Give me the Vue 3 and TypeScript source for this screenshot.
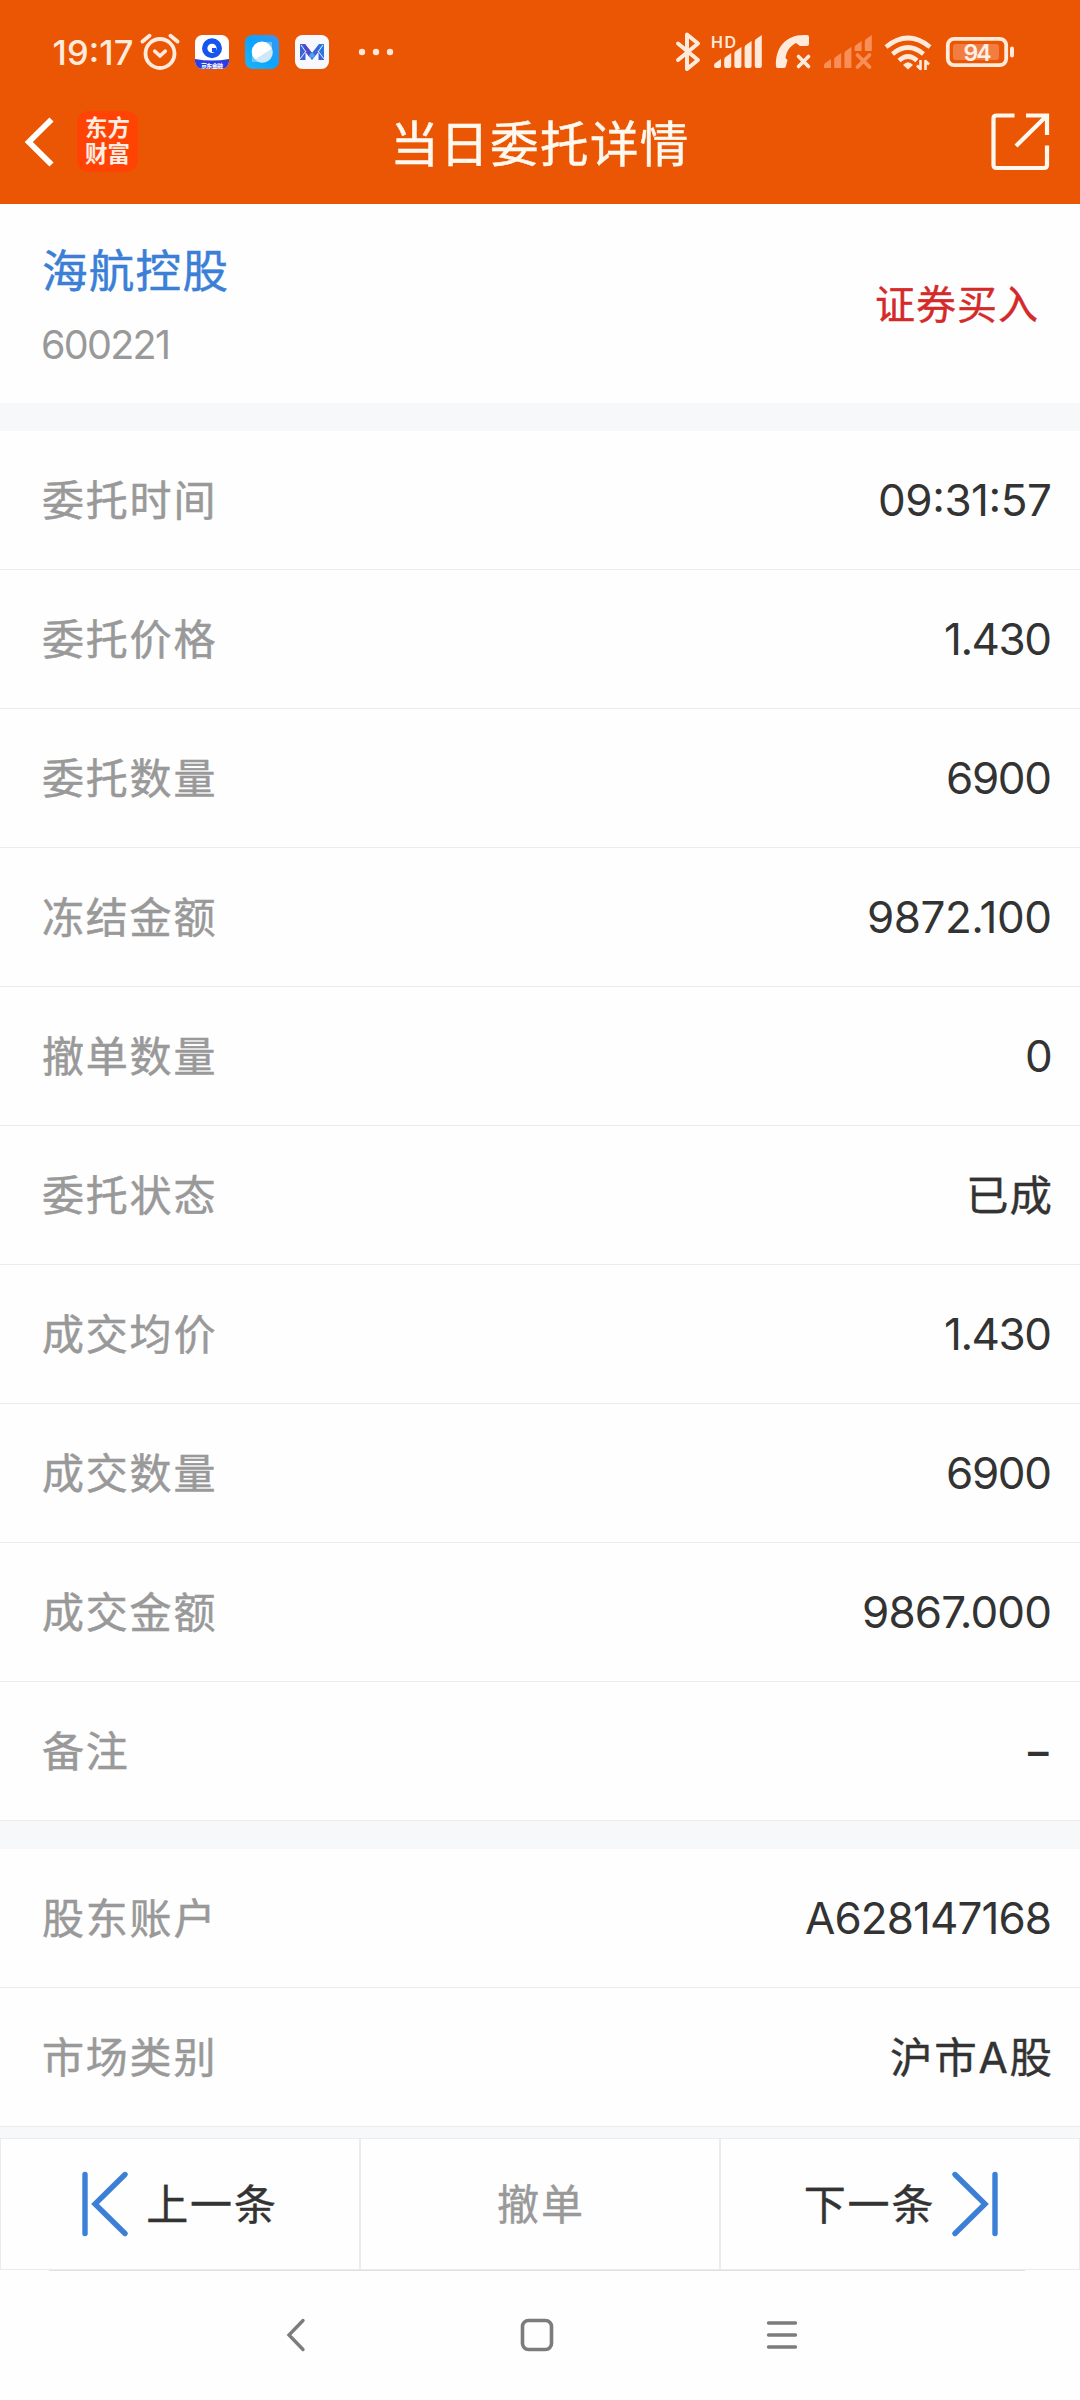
<script setup lang="ts">
interface Row {
  label: string
  value: string
  width: number
  kind?: 'cjk' | 'dash'
}

const orderRows: Row[] = [
  { label: '委托时间', value: '09:31:57', width: 174 },
  { label: '委托价格', value: '1.430', width: 108 },
  { label: '委托数量', value: '6900', width: 106 },
  { label: '冻结金额', value: '9872.100', width: 185 },
  { label: '撤单数量', value: '0', width: 27 },
  { label: '委托状态', value: '已成', width: 86, kind: 'cjk' },
  { label: '成交均价', value: '1.430', width: 108 },
  { label: '成交数量', value: '6900', width: 106 },
  { label: '成交金额', value: '9867.000', width: 190 },
  { label: '备注', value: '–', width: 26, kind: 'dash' },
]

const accountRows: Row[] = [
  { label: '股东账户', value: 'A628147168', width: 247 },
  { label: '市场类别', value: '沪市A股', width: 162, kind: 'cjk' },
]

const sections: Row[][] = [orderRows, accountRows]
const bars: number[] = [0, 1, 2, 3, 4]
</script>

<template>
  <div class="screen">
    <header class="top">
      <div class="status">
        <svg class="clock" width="82" height="40" viewBox="0 0 82 40">
          <text x="-1.500" y="33" textLength="81" class="clock-text">19:17</text>
        </svg>
        <svg class="alarm" width="40" height="38" viewBox="0 0 40 38" fill="none" stroke="#ffeadb" stroke-linecap="round" stroke-linejoin="round">
          <circle cx="20" cy="20.500" r="14.500" stroke-width="3.800" />
          <path d="M2.500 8.500 9.500 2.800M30.500 2.800 37.500 8.500" stroke-width="4" />
          <path d="m14.700 18.200 5.300 4.800 5.300-4.800" stroke-width="3.600" />
        </svg>
        <svg class="app-a" width="34" height="34" viewBox="0 0 34 34">
          <clipPath id="appA"><rect width="34" height="34" rx="7.500" /></clipPath>
          <g clip-path="url(#appA)">
            <rect width="34" height="34" fill="#fff" />
            <path d="M0 24Q17 27 34 24V34H0Z" fill="#2b3fe0" />
            <circle cx="17" cy="13.300" r="7.300" fill="none" stroke="#1455f0" stroke-width="5.400" />
            <path d="M17 13h4v4h-4Z" fill="#1455f0" />
            <text x="6" y="32.600" textLength="22" class="tiny">京东金融</text>
          </g>
        </svg>
        <svg class="app-b" width="34" height="34" viewBox="0 0 34 34">
          <linearGradient id="appB" x1="0" y1="1" x2="1" y2="0"><stop stop-color="#22b3ee" /><stop offset=".5" stop-color="#0aa4ff" /><stop offset="1" stop-color="#3d94ef" /></linearGradient>
          <rect width="34" height="34" rx="7.500" fill="url(#appB)" />
          <path d="M7 27V18L18 7h9v8L16 27Z" fill="#7fd0fb" opacity=".75" />
          <circle cx="17" cy="16.800" r="10.300" fill="#fff" />
          <path d="M10 24.500A10.300 10.300 0 0 0 27 13.500Z" fill="#cfe7f7" />
        </svg>
        <svg class="app-c" width="34" height="34" viewBox="0 0 34 34">
          <rect width="34" height="34" rx="7.500" fill="#f7f9ff" />
          <path d="M5 9h5l7 9 7-9h5v16h-5.500V17L17 25 10.500 17v8H5Z" fill="#3c62d8" />
          <path d="M10 9l7 9-3 3.500L8 13Z" fill="#5148c8" />
          <path d="M24 9h5v16l-5-8Z" fill="#2878df" />
          <path d="m5 24 6-8M29 24l-6-8M6 10l5 7M28 10l-5 7" stroke="#e9efff" stroke-width="1" />
          <circle cx="17" cy="20.500" r="2.600" fill="#4aa3f2" />
        </svg>
        <svg class="more" width="36" height="8" viewBox="0 0 36 8" fill="#ffe6d6">
          <circle cx="4" cy="4" r="3.200" /><circle cx="18" cy="4" r="3.200" /><circle cx="32" cy="4" r="3.200" />
        </svg>
        <svg class="system" width="342" height="44" viewBox="674 30 342 44" fill="none" stroke="#ffeadb" stroke-linecap="round" stroke-linejoin="round">
          <path d="M678 43.500 698 60l-11 9V34.500l11 9L678 60" stroke-width="4" />
          <text x="711" y="48" textLength="25" class="hd">HD</text>
          <g fill="#ffeadb" stroke="none">
            <path v-for="i in bars" :key="i" :d="`M${714 + i * 10.2} ${65.5 - i * 6}q0-2 2-3l5-3.500V66q0 2-2 2h-3q-2 0-2-2Z`" />
            <path d="M776 66.500c-1-18 9-31.500 28-31.500h3q2 0 2 2v7q0 2-2 2h-7l-4-3c-6 3-9.500 8-10.500 15l2 2-1.500 6q-.5 2-2 2h-6q-2 0-2-1.500Z" />
          </g>
          <path d="m798.500 56.500 10 10m0-10-10 10" stroke-width="3.600" />
          <g fill="#f88e58" stroke="none">
            <path v-for="i in bars" :key="i" :d="`M${824 + i * 10.2} ${65.5 - i * 6}q0-2 2-3l5-3.500V${i > 2 ? 51 : 68}H${824 + i * 10.2}Z`" />
          </g>
          <path d="m857.500 55 12 12m0-12-12 12" stroke="#f88e58" stroke-width="3.800" />
          <g stroke-width="4.600" stroke-linecap="butt">
            <path d="M886 47q22-18 44 0" />
            <path d="M892.500 54q15.500-13 31 0" />
            <path d="M899 60.500q9-8 18 0" />
          </g>
          <path d="M903 65q5-5.500 10 0l-5 4.500Z" fill="#ffeadb" stroke="none" />
          <path d="M920.500 60v9l-3.500-3.500M925.500 70V61l3.500 3.500" stroke-width="2.600" stroke-linecap="butt" />
          <rect x="947.800" y="38.800" width="58.400" height="26.400" rx="6.500" stroke-width="3.800" />
          <rect x="953" y="44" width="46" height="16" rx="3" fill="#f27d42" stroke="none" />
          <path d="M1012 48.500v7" stroke-width="4" />
          <text x="963.500" y="60.800" textLength="28" class="battery">94</text>
        </svg>
      </div>
      <div class="nav">
        <div class="nav-side">
          <svg class="back" width="32" height="52" viewBox="0 0 32 52" fill="none" stroke="#fff" stroke-width="5.800">
            <path d="M27.500 3.500 4.800 26 27.500 48.500" stroke-linejoin="miter" />
          </svg>
          <div class="brand"><span>东方</span><span>财富</span></div>
        </div>
        <h1>当日委托详情</h1>
        <svg class="share" width="60" height="60" viewBox="0 0 60 60" fill="none" stroke="#fff8f0" stroke-width="4.200">
          <path d="M23.500 3.500H5.500Q2.500 3.500 2.500 6.500V53Q2.500 56 5.500 56H53Q56 56 56 53V33.500" />
          <path d="M35 3.500H56V23M55 4.500 25 34" />
        </svg>
      </div>
    </header>

    <section class="stock">
      <div>
        <div class="name">海航控股</div>
        <svg class="code" width="130" height="40" viewBox="0 0 130 40"><text x="-1" y="36" textLength="130">600221</text></svg>
      </div>
      <div class="side">证券买入</div>
    </section>

    <section v-for="(rows, n) in sections" :key="n" class="group">
      <div v-for="row in rows" :key="row.label" class="row">
        <span class="label">{{ row.label }}</span>
        <svg class="value" :width="row.width" height="60" :viewBox="`0 0 ${row.width} 60`">
          <text :x="row.kind === 'dash' ? 2 : 0" :y="row.kind === 'dash' ? 45 : 46" :textLength="row.width" :class="row.kind">{{ row.value }}</text>
        </svg>
      </div>
    </section>

    <div class="actions">
      <button class="prev">
        <svg width="46" height="66" viewBox="0 0 46 66" fill="none" stroke="#3b7fd6" stroke-width="5.400" stroke-linecap="round">
          <path d="M3 3.500V62.500M43 3.500 13 33 43 62.500" />
        </svg>
        <span>上一条</span>
      </button>
      <button class="cancel"><span>撤单</span></button>
      <button class="next">
        <span>下一条</span>
        <svg width="46" height="66" viewBox="0 0 46 66" fill="none" stroke="#3b7fd6" stroke-width="5.400" stroke-linecap="round">
          <path d="M43 3.500V62.500M3 3.500 33 33 3 62.500" />
        </svg>
      </button>
    </div>
    <div class="rule"></div>
    <footer class="system-nav">
      <svg width="20" height="34" viewBox="0 0 20 34" fill="none" stroke="#7c7c7c" stroke-width="3.400" stroke-linecap="round"><path d="M17 2.500 3 17 17 31.500" /></svg>
      <svg class="home" width="34" height="34" viewBox="0 0 34 34" fill="none" stroke="#7c7c7c" stroke-width="3.600"><rect x="2.500" y="2.500" width="29" height="29" rx="6" /></svg>
      <svg class="menu" width="32" height="30" viewBox="0 0 32 30" fill="none" stroke="#7c7c7c" stroke-width="3.400" stroke-linecap="round"><path d="M2.500 3H29.500M2.500 15H29.500M2.500 27H29.500" /></svg>
    </footer>
  </div>
</template>

<style>
body {
  background: #fefefe;
}
</style>

<style scoped>
.screen {
  width: 1080px;
  height: 2400px;
  overflow: hidden;
  display: flex;
  flex-direction: column;
  background: #f7f8fa;
  font-family: Inter, "Noto Sans CJK SC", sans-serif;
  color: #333;
}
svg {
  display: block;
  flex: none;
  overflow: visible;
}
.top {
  height: 204px;
  flex: none;
  background: #ea5604;
}
.status {
  height: 104px;
  display: flex;
  align-items: center;
  padding-left: 54px;
}
.clock-text {
  font-size: 34.5px;
  font-weight: 500;
  fill: #ffeadb;
}
.alarm { margin-left: 4px; }
.app-a { margin-left: 15px; }
.app-b, .app-c { margin-left: 16px; }
.more { margin-left: 29px; }
.system { margin-left: 280px; }
.tiny {
  font-size: 6px;
  font-weight: 700;
  fill: #fff;
}
.hd {
  font-size: 16px;
  font-weight: 600;
  fill: #ffeadb;
  stroke: none;
}
.battery {
  font-size: 23px;
  font-weight: 600;
  fill: #fff0e6;
  stroke: none;
}
.nav {
  height: 76px;
  display: flex;
  align-items: center;
  justify-content: space-between;
  padding: 0 29px 0 24px;
}
.nav-side {
  display: flex;
  align-items: center;
  gap: 21px;
  width: 138px;
}
.back { margin-top: -1px; }
.brand {
  width: 61px;
  height: 61px;
  margin-top: -2px;
  border-radius: 12px;
  background: #ff4304;
  color: #ffede2;
  font-size: 22.5px;
  font-weight: 700;
  line-height: 26px;
  display: flex;
  flex-direction: column;
  align-items: center;
  justify-content: center;
}
h1 {
  margin: 5px 0 0;
  font-size: 48.5px;
  font-weight: 400;
  line-height: 72px;
  letter-spacing: 1.4px;
  color: #fff8ef;
  -webkit-text-stroke: 0.5px #fff8ef;
}
.share { margin-left: 73px; }
.stock {
  height: 199px;
  flex: none;
  display: flex;
  justify-content: space-between;
  align-items: center;
  padding: 0 41px 0 42px;
  background: #fefefe;
}
.name {
  margin-top: -4px;
  font-size: 45.5px;
  line-height: 64px;
  letter-spacing: 1.3px;
  color: #3b7fd6;
  -webkit-text-stroke: 0.5px #3b7fd6;
}
.code {
  margin-top: 19px;
  font-size: 39.5px;
  fill: #999;
}
.side {
  margin-top: -4px;
  font-size: 40px;
  letter-spacing: 1px;
  color: #d42a2a;
  -webkit-text-stroke: 0.4px #d42a2a;
}
.group {
  margin-top: 28px;
  background: #fefefe;
}
.row {
  height: 139px;
  box-sizing: border-box;
  border-bottom: 1px solid #ebebeb;
  display: flex;
  align-items: center;
  justify-content: space-between;
  padding: 0 28px 0 42px;
}
.label {
  font-size: 42px;
  line-height: 60px;
  margin-top: 2px;
  letter-spacing: 1.8px;
  color: #999;
  -webkit-text-stroke: 0.5px #999;
}
.value {
  font-size: 44px;
  fill: #333;
}
.value .cjk {
  font-size: 42.5px;
  stroke: #333;
  stroke-width: 0.4px;
}
.value .dash {
  font-size: 41px;
  font-weight: 600;
}
.actions {
  margin-top: 11px;
  height: 132px;
  flex: none;
  display: flex;
  background: #fefefe;
}
.actions button {
  width: 360px;
  box-sizing: border-box;
  flex: none;
  display: flex;
  align-items: center;
  justify-content: center;
  gap: 17px;
  border: 1px solid #ebebeb;
  background: #fefefe;
  padding: 0;
  color: #333;
  font: 42px/60px "Noto Sans CJK SC", sans-serif;
  letter-spacing: 1.9px;
}
.actions span {
  margin-top: -4px;
  -webkit-text-stroke: 0.4px currentColor;
}
.actions .cancel {
  color: #999;
  padding-left: 2px;
}
.actions .prev { gap: 18px; }
.actions .next { padding-left: 2px; }
.rule {
  height: 1px;
  flex: none;
  background: linear-gradient(#e0e0e0, #e0e0e0) 49px 0 / 976px 1px no-repeat #fefefe;
}
.system-nav {
  flex: 1;
  display: flex;
  align-items: center;
  padding: 0 0 1px 286px;
  background: #fefefe;
}
.home { margin-left: 214px; }
.menu { margin-left: 212px; }
</style>
